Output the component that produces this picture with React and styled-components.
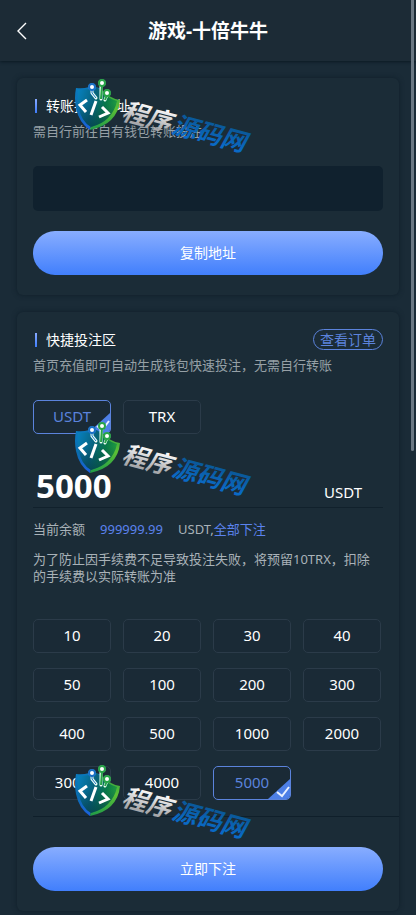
import React, { useState } from 'react';
import styled, { createGlobalStyle, css } from 'styled-components';

const Global = createGlobalStyle`
  * { box-sizing: border-box; }
  html { scrollbar-width: none; }
  body {
    margin: 0;
    background: #1a2b37;
    color: #fff;
    font-family: "Noto Sans", "Noto Sans CJK SC", sans-serif;
    font-size: 14px;
  }
  button, input { font: inherit; color: inherit; }
`;

const Page = styled.div`
  position: relative;
  overflow: hidden;
`;

const Header = styled.header`
  display: grid;
  grid-template-columns: 44px 1fr 44px;
  align-items: center;
  height: 61px;
  background: #1c2b36;
  box-shadow: 0 1px 3px #0b1923;
`;

const Back = styled.button`
  display: flex;
  justify-content: center;
  padding: 0;
  border: 0;
  background: none;
  cursor: pointer;
`;

const Title = styled.h1`
  margin: 0;
  font-size: 19px;
  line-height: 28px;
  font-weight: 700;
  text-align: center;
`;

const Content = styled.main`
  display: flex;
  flex-direction: column;
  gap: 17px;
  padding: 17px 17px 4px;
`;

const Card = styled.section`
  padding: 17px 16px 20px;
  border-radius: 6px;
  background: #1b2c37;
  box-shadow: 0 0 5px #0f1e29;
`;

const CardHead = styled.div`
  display: flex;
  align-items: center;
  justify-content: space-between;
  height: 21px;
`;

const CardTitle = styled.h2`
  display: flex;
  align-items: center;
  gap: 9px;
  margin: 0;
  padding-left: 2px;
  font-size: 14px;
  line-height: 20px;
  font-weight: 400;

  &::before {
    content: "";
    width: 2px;
    height: 14px;
    background: linear-gradient(#88aaff, #3f7dfb);
  }
`;

const Hint = styled.p`
  margin: 6px 0 0;
  color: #96a0a6;
  font-size: 13px;
  line-height: 18px;
`;

const Orders = styled.a`
  padding: 0 6px;
  border: 1px solid #5b83dc;
  border-radius: 11px;
  color: #5b83dc;
  font-size: 14px;
  line-height: 19px;
  text-decoration: none;
`;

const Address = styled.output`
  display: block;
  height: 45px;
  margin: 26px 0 20px;
  border-radius: 5px;
  background: #10212e;
`;

const Primary = styled.button`
  display: block;
  width: 100%;
  height: 44px;
  padding: 0 0 2px;
  border: 0;
  border-radius: 22px;
  background: linear-gradient(#88adff, #417ffc);
  font-size: 14px;
  cursor: pointer;
`;

const Options = styled.div`
  display: grid;
  grid-template-columns: repeat(4, 1fr);
  gap: 15px 12px;
  margin-top: ${(p) => p.$top}px;
  padding-right: 2px;
`;

const Choice = styled.button`
  position: relative;
  height: 34px;
  padding: 0 0 2px;
  overflow: hidden;
  border: 1px solid #2b3b49;
  border-radius: 5px;
  background: #1a2a36;
  font-size: 15px;
  line-height: 20px;
  cursor: pointer;
  ${(p) => p.$active && css`
    border-color: #5b83dc;
    color: #5b83dc;
  `}
`;

const Corner = styled.svg`
  position: absolute;
  right: 0;
  bottom: 0;
`;

const AmountRow = styled.label`
  display: flex;
  align-items: center;
  height: 43px;
  margin-top: 31px;
  padding: 0 21px 0 3px;
  border-bottom: 1px solid #11212c;
`;

const Amount = styled.input`
  flex: 1;
  min-width: 0;
  height: 42px;
  padding: 0 0 2px;
  border: 0;
  outline: 0;
  background: none;
  font-size: 33px;
  font-weight: 700;
`;

const Unit = styled.span`
  padding-top: 12px;
  font-size: 15px;
  line-height: 20px;
`;

const Balance = styled.div`
  display: flex;
  margin-top: 11px;
  color: #a9b2b8;
  font-size: 13px;
  line-height: 20px;
`;

const BalanceValue = styled.span`
  margin: 0 15px;
  color: #5b83ee;
`;

const AllIn = styled.button`
  padding: 0;
  border: 0;
  background: none;
  color: #5b83ee;
  cursor: pointer;
`;

const Notice = styled.p`
  margin: 12px 0 0;
  padding-right: 4px;
  color: #a9b2b8;
  font-size: 13px;
  line-height: 17px;
`;

const Divider = styled.hr`
  height: 1px;
  margin: 16px -16px 30px 0;
  border: 0;
  background: #0f1f2a;
`;

const Scrollbar = styled.div`
  position: absolute;
  top: 0;
  right: 2px;
  width: 3px;
  height: 451px;
  border-radius: 0 0 2px 2px;
  background: #6b7883;
`;

const Marks = styled.div`
  position: absolute;
  top: 79px;
  left: 74px;
  display: grid;
  grid-auto-rows: 343px;
  pointer-events: none;
`;

const Mark = styled.svg`
  display: block;
  font-family: "Noto Sans CJK SC", sans-serif;
  font-weight: 700;
  font-style: italic;
  font-size: 25px;
`;

function Watermark({ id }) {
  return (
    <Mark width="184" height="86" viewBox="0 0 184 86" aria-hidden="true">
      <defs>
        <linearGradient id={`${id}-left`} x1="0" y1="0" x2="0.4" y2="1">
          <stop offset="0" stopColor="#0a7cc0" />
          <stop offset="0.5" stopColor="#0b6cae" />
          <stop offset="1" stopColor="#1b62dc" />
        </linearGradient>
        <linearGradient id={`${id}-right`} x1="0" y1="0" x2="0" y2="1">
          <stop offset="0" stopColor="#2c9b45" />
          <stop offset="0.5" stopColor="#5cc035" />
          <stop offset="1" stopColor="#1f9a48" />
        </linearGradient>
        <linearGradient id={`${id}-core`} x1="0" y1="0.1" x2="1" y2="0.4">
          <stop offset="0" stopColor="#0780be" />
          <stop offset="0.45" stopColor="#07627c" />
          <stop offset="0.75" stopColor="#087a48" />
          <stop offset="1" stopColor="#219a40" />
        </linearGradient>
        <linearGradient id={`${id}-shade`} x1="0" y1="0" x2="0" y2="1">
          <stop offset="0.4" stopColor="#063b4c" stopOpacity="0" />
          <stop offset="1" stopColor="#063b4c" stopOpacity="0.7" />
        </linearGradient>
        <linearGradient id={`${id}-silver`} x1="0" y1="0" x2="0" y2="1">
          <stop offset="0.2" stopColor="#ffffff" />
          <stop offset="0.8" stopColor="#a6a8ab" />
        </linearGradient>
        <linearGradient id={`${id}-blue`} x1="0" y1="0" x2="0" y2="1">
          <stop offset="0.2" stopColor="#0a5795" />
          <stop offset="0.8" stopColor="#0a6ac6" />
        </linearGradient>
      </defs>
      <path d="M2 9Q9 10 15 8L26 9L16 51Q5 44 2 29Q0 19 2 9Z" fill={`url(#${id}-left)`} />
      <path d="M26 9Q34 19 46 21Q45 33 37 41Q30 48 16 51Z" fill={`url(#${id}-right)`} />
      <path d="M4 11Q15 11 23 8Q32 19 43 22Q41 32 34 39Q28 45 17 48Q7 42 5 29Q3 20 4 11Z" fill={`url(#${id}-core)`} />
      <path d="M4 11Q15 11 23 8Q32 19 43 22Q41 32 34 39Q28 45 17 48Q7 42 5 29Q3 20 4 11Z" fill={`url(#${id}-shade)`} />
      <g fill="none" stroke="#eefff6" strokeWidth="3" strokeLinecap="round" strokeLinejoin="round">
        <path d="M18 10V14L22 19M27 7V20M33 16L31 21" />
        <circle cx="18" cy="8" r="2" />
        <circle cx="28" cy="4" r="2" />
        <circle cx="33" cy="14" r="2" />
      </g>
      <path d="M18 10V14L22 19" fill="none" stroke="#1472c4" strokeWidth="1" />
      <path d="M28 6L27 20M33 16L31 21" fill="none" stroke="#27a348" strokeWidth="2" />
      <circle cx="18" cy="8" r="3" fill="#fff" stroke="#176fc5" strokeWidth="2" />
      <circle cx="28" cy="4" r="3" fill="#fff" stroke="#27a348" strokeWidth="2" />
      <circle cx="33" cy="14" r="3" fill="#fff" stroke="#27a348" strokeWidth="2" />
      <path d="M13 21L6 26L12 33M22 22L17 36M28 28L34 34L25 38" fill="none" stroke="#fff" strokeWidth="3" />
      <g transform="rotate(15 46 42)">
        <text x="46" y="40" fill={`url(#${id}-silver)`}>程序</text>
        <text x="98" y="40" fill={`url(#${id}-blue)`}>源码网</text>
      </g>
    </Mark>
  );
}

function Option({ active, children, onClick }) {
  return (
    <Choice type="button" $active={active} aria-pressed={active} onClick={onClick}>
      {children}
      {active && (
        <Corner width="22" height="20" viewBox="0 0 22 20">
          <path d="M22 0V20H0Z" fill="#4d7fe6" />
          <path d="M9 13L14 17L21 8" fill="none" stroke="#e8f0ff" strokeWidth="2" />
        </Corner>
      )}
    </Choice>
  );
}

const amounts = ['10', '20', '30', '40', '50', '100', '200', '300', '400', '500', '1000', '2000', '3000', '4000', '5000'];

export default function App() {
  const [coin, setCoin] = useState('USDT');
  const [amount, setAmount] = useState('5000');
  return (
    <Page>
      <Global />
      <Header>
        <Back type="button" aria-label="返回">
          <svg width="12" height="18" viewBox="0 0 12 18" fill="none" stroke="#fff" strokeWidth="1.4">
            <path d="M10 1L2 9L10 17" />
          </svg>
        </Back>
        <Title>游戏-十倍牛牛</Title>
      </Header>
      <Content>
        <Card>
          <CardHead><CardTitle>转账投注地址</CardTitle></CardHead>
          <Hint>需自行前往自有钱包转账投注</Hint>
          <Address aria-label="转账投注地址" />
          <Primary type="button">复制地址</Primary>
        </Card>
        <Card>
          <CardHead>
            <CardTitle>快捷投注区</CardTitle>
            <Orders href="#orders">查看订单</Orders>
          </CardHead>
          <Hint>首页充值即可自动生成钱包快速投注，无需自行转账</Hint>
          <Options $top={26}>
            {['USDT', 'TRX'].map((c) => (
              <Option key={c} active={c === coin} onClick={() => setCoin(c)}>{c}</Option>
            ))}
          </Options>
          <AmountRow>
            <Amount aria-label="投注金额" inputMode="numeric" value={amount} onChange={(e) => setAmount(e.target.value)} />
            <Unit>{coin}</Unit>
          </AmountRow>
          <Balance>
            当前余额<BalanceValue>999999.99</BalanceValue>{coin},
            <AllIn type="button" onClick={() => setAmount('999999.99')}>全部下注</AllIn>
          </Balance>
          <Notice>为了防止因手续费不足导致投注失败，将预留10TRX，扣除的手续费以实际转账为准</Notice>
          <Options $top={34}>
            {amounts.map((a) => (
              <Option key={a} active={a === amount} onClick={() => setAmount(a)}>{a}</Option>
            ))}
          </Options>
          <Divider />
          <Primary type="button">立即下注</Primary>
        </Card>
      </Content>
      <Scrollbar />
      <Marks>
        <Watermark id="mark-a" />
        <Watermark id="mark-b" />
        <Watermark id="mark-c" />
      </Marks>
    </Page>
  );
}
